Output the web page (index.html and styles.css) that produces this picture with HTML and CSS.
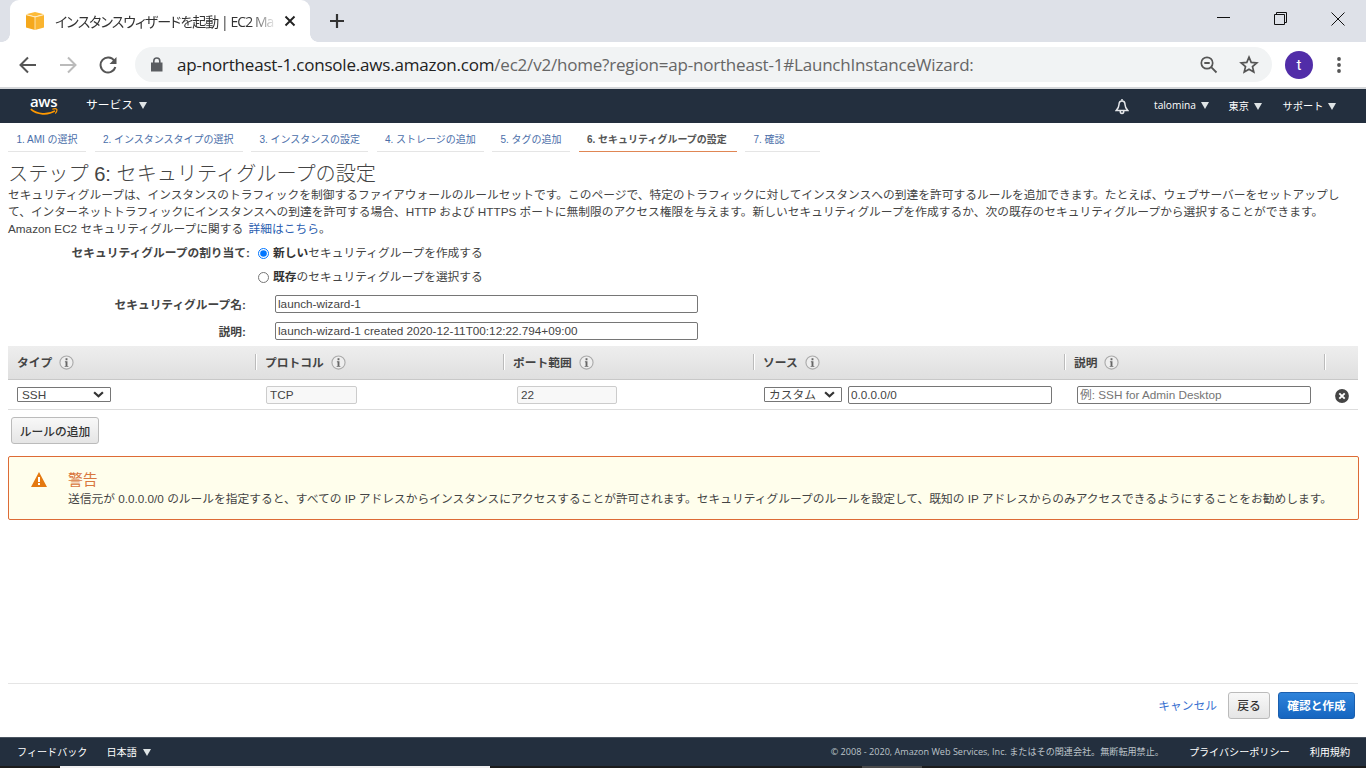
FILE: index.html
```html
<!DOCTYPE html>
<html lang="ja">
<head>
  <meta charset="UTF-8">
  <meta name="viewport" content="width=device-width, initial-scale=1.0">

  <title>インスタンスウィザードを起動 | EC2 Management Console</title>
  <link rel="stylesheet" href="styles.css">
</head>
<body>
  <svg class="defs">
    <symbol id="info" viewBox="0 0 16 16">
      <circle cx="8" cy="8" r="7" fill="#eee" stroke="#aaa" stroke-width="1.2"/>
      <path d="M7 3.500h2v2H7zM6.300 6.600H9v5h1v1H6v-1h1V7.600h-.7z" fill="#666"/>
    </symbol>
    <symbol id="caret" viewBox="0 0 10 6">
      <path d="M1 1l4 3.700L9 1" fill="none" stroke="#333" stroke-width="2"/>
    </symbol>
  </svg>

  <div class="tab-strip">
    <div class="tab">
      <svg class="favicon" width="20" height="20" viewBox="0 0 20 20">
        <path d="M1 3.700l9 2.300v13l-9-2.500z" fill="#f5a81c"/>
        <path d="M19 3.700L10 6v13l9-2.500z" fill="#fab42f"/>
        <path d="M1 3.200L10 1l9 2.200-9 2.300z" fill="#fdbb38"/>
        <path d="M10 6v13M1 3.700L10 6l9-2.300" fill="none" stroke="#fff0cd" stroke-width=".8"/>
      </svg>
      <span class="tab-title">インスタンスウィザードを起動 | EC2 Ma</span>
      <svg class="tab-close" width="12" height="12" viewBox="0 0 12 12"><path d="M1.500 1.500l9 9M10.500 1.500l-9 9" stroke="#222" stroke-width="1.900"/></svg>
    </div>
    <svg class="new-tab" width="16" height="16" viewBox="0 0 16 16"><path d="M8 1v14M1 8h14" stroke="#333" stroke-width="2.200"/></svg>
    <div class="window-buttons">
      <svg width="14" height="14" viewBox="0 0 14 14"><path d="M0 5.500h13" stroke="#111"/></svg>
      <svg width="14" height="14" viewBox="0 0 14 14"><path d="M.5 2.500h10v10H.5zM2.500 2.500v-2h10v10h-2" fill="none" stroke="#111"/></svg>
      <svg width="14" height="14" viewBox="0 0 14 14"><path d="M.5.5l13 13M13.500.5l-13 13" stroke="#111"/></svg>
    </div>
  </div>

  <div class="toolbar">
    <svg width="18" height="18" viewBox="0 0 18 18"><path d="M17 9H2M9 1.500L1.500 9 9 16.500" fill="none" stroke="#555" stroke-width="2"/></svg>
    <svg width="18" height="18" viewBox="0 0 18 18"><path d="M1 9h15M9 1.500L16.500 9 9 16.500" fill="none" stroke="#bbb" stroke-width="2"/></svg>
    <svg width="18" height="18" viewBox="0 0 18 18"><path d="M15.300 4.800A7.500 7.500 0 1 0 16.300 11" fill="none" stroke="#555" stroke-width="2"/><path d="M17.500 1v7h-7z" fill="#555"/></svg>
    <div class="omnibox">
      <svg width="12" height="15" viewBox="0 0 12 15"><path d="M0 5.500h11.500v9H0z" fill="#5a5d61"/><path d="M2.800 6V4a3 3 0 0 1 6 0v2" fill="none" stroke="#5a5d61" stroke-width="1.600"/></svg>
      <div class="url">ap-northeast-1.console.aws.amazon.com<span>/ec2/v2/home?region=ap-northeast-1#LaunchInstanceWizard:</span></div>
      <svg width="18" height="18" viewBox="0 0 18 18"><circle cx="7" cy="7" r="5.700" fill="none" stroke="#555" stroke-width="1.700"/><path d="M4.300 7h5.400M11.200 11.200l5.300 5.300" stroke="#555" stroke-width="1.800"/></svg>
      <svg class="star" width="20" height="19" viewBox="0 0 20 19"><path d="M10 2.200l2.200 5.200 5.600.5-4.300 3.700 1.300 5.500L10 14.200l-4.800 2.900 1.300-5.500-4.300-3.700 5.600-.5z" fill="none" stroke="#555" stroke-width="1.700"/></svg>
    </div>
    <div class="avatar">t</div>
    <svg class="menu" width="4" height="16" viewBox="0 0 4 16"><g fill="#555"><circle cx="2" cy="2" r="1.900"/><circle cx="2" cy="8" r="1.900"/><circle cx="2" cy="14" r="1.900"/></g></svg>
  </div>

  <div class="aws-nav">
    <div class="aws-logo">
      <span>aws</span>
      <svg width="28" height="8" viewBox="0 0 28 8"><path d="M.8 1.200C7 6.800 18 7.400 25 2.900" fill="none" stroke="#f90" stroke-width="1.600"/><path d="M22.300 1.300c2-.7 4-.5 4.500 0 .3 1-.4 3-1.600 4.200" fill="none" stroke="#f90" stroke-width="1.200"/></svg>
    </div>
    <div class="services">サービス <i class="arrow"></i></div>
    <svg class="bell" width="14" height="16" viewBox="0 0 14 16"><path d="M7 2c-2 0-3 1.700-3 3.500 0 2.600-1 4-2.800 6h11.600c-1.800-2-2.800-3.400-2.800-6C10 3.700 9 2 7 2zM7 0v2M5.200 12c0 3.300 3.600 3.300 3.600 0" fill="none" stroke="#e4e7ea" stroke-width="1.500"/></svg>
    <div class="nav-item account">talomina <i class="arrow"></i></div>
    <div class="nav-item region">東京 <i class="arrow"></i></div>
    <div class="nav-item support">サポート <i class="arrow"></i></div>
  </div>

  <div class="content">
    <div class="steps">
      <div class="step step1">1. AMI の選択</div>
      <div class="step step2">2. インスタンスタイプの選択</div>
      <div class="step step3">3. インスタンスの設定</div>
      <div class="step step4">4. ストレージの追加</div>
      <div class="step step5">5. タグの追加</div>
      <div class="step step6 active">6. セキュリティグループの設定</div>
      <div class="step step7">7. 確認</div>
    </div>

    <h1>ステップ 6: セキュリティグループの設定</h1>
    <p class="intro">セキュリティグループは、インスタンスのトラフィックを制御するファイアウォールのルールセットです。このページで、特定のトラフィックに対してインスタンスへの到達を許可するルールを追加できます。たとえば、ウェブサーバーをセットアップし<br>て、インターネットトラフィックにインスタンスへの到達を許可する場合、HTTP および HTTPS ポートに無制限のアクセス権限を与えます。新しいセキュリティグループを作成するか、次の既存のセキュリティグループから選択することができます。<br>Amazon EC2 セキュリティグループに関する <a>詳細はこちら</a>。</p>

    <div class="assign">
      <div class="assign-label">セキュリティグループの割り当て:</div>
      <div class="assign-options">
        <label><input type="radio" name="group" checked><span><b>新しい</b>セキュリティグループを作成する</span></label>
        <label><input type="radio" name="group"><span><b>既存</b>のセキュリティグループを選択する</span></label>
      </div>
    </div>
    <div class="field">
      <label for="group-name">セキュリティグループ名:</label>
      <input type="text" id="group-name" value="launch-wizard-1">
    </div>
    <div class="field">
      <label for="group-desc">説明:</label>
      <input type="text" id="group-desc" value="launch-wizard-1 created 2020-12-11T00:12:22.794+09:00">
    </div>

    <div class="rules">
      <div class="rules-head">
        <div class="col">タイプ <svg><use href="#info"/></svg></div>
        <div class="col">プロトコル <svg><use href="#info"/></svg></div>
        <div class="col">ポート範囲 <svg><use href="#info"/></svg></div>
        <div class="col">ソース <svg><use href="#info"/></svg></div>
        <div class="col">説明 <svg><use href="#info"/></svg></div>
        <div class="col"></div>
      </div>
      <div class="rules-row">
        <div class="cell type"><div class="pick"><select><option>SSH</option></select><svg><use href="#caret"/></svg></div></div>
        <div class="cell protocol"><input type="text" value="TCP" disabled></div>
        <div class="cell port"><input type="text" value="22" disabled></div>
        <div class="cell source"><div class="pick"><select><option>カスタム</option></select><svg><use href="#caret"/></svg></div><input type="text" value="0.0.0.0/0"></div>
        <div class="cell desc"><input type="text" placeholder="例: SSH for Admin Desktop"></div>
        <div class="cell remove"><svg width="14" height="14" viewBox="0 0 14 14"><circle cx="7" cy="7" r="6.900" fill="#444"/><path d="M4.300 4.300l5.400 5.400M9.700 4.300L4.300 9.700" stroke="#fff" stroke-width="1.900"/></svg></div>
      </div>
    </div>
    <button class="btn add-rule">ルールの追加</button>

    <div class="warning">
      <svg width="16" height="15" viewBox="0 0 16 15"><path d="M8 0l8 15H0z" fill="#e47911"/><path d="M7 5h2v5H7zM7 11h2v2H7z" fill="#fff"/></svg>
      <div>
        <h2>警告</h2>
        <p>送信元が 0.0.0.0/0 のルールを指定すると、すべての IP アドレスからインスタンスにアクセスすることが許可されます。セキュリティグループのルールを設定して、既知の IP アドレスからのみアクセスできるようにすることをお勧めします。</p>
      </div>
    </div>

    <div class="actions">
      <a>キャンセル</a>
      <button class="btn back">戻る</button>
      <button class="btn primary">確認と作成</button>
    </div>
  </div>

  <div class="aws-footer">
    <div>フィードバック</div>
    <div class="language">日本語 <i class="arrow"></i></div>
    <div class="copyright">© 2008 - 2020, Amazon Web Services, Inc. またはその関連会社。無断転用禁止。</div>
    <div class="privacy">プライバシーポリシー</div>
    <div class="terms">利用規約</div>
  </div>
  <div class="taskbar"><div class="search"></div><div class="task"></div></div>
</body>
</html>
```
FILE: styles.css
```css
* {
  box-sizing: border-box;
}

body {
  margin: 0;
  height: 768px;
  overflow: hidden;
  display: flex;
  flex-direction: column;
  background: #fff;
  color: #444;
  font-family: "Liberation Sans", "Noto Sans CJK JP", sans-serif;
  font-size: 11.74px;
}

svg {
  display: block;
  flex: none;
}

.defs {
  display: none;
}

/* browser window */
.tab-strip {
  height: 42px;
  flex: none;
  display: flex;
  background: #dee1e8;
}

.tab {
  position: relative;
  width: 300px;
  margin-left: 10px;
  padding: 0 14px 0 15px;
  display: flex;
  align-items: center;
  background: #fff;
  border-radius: 9px 9px 0 0;
}

.tab::before,
.tab::after {
  content: "";
  position: absolute;
  bottom: 0;
  width: 8px;
  height: 8px;
}

.tab::before {
  left: -8px;
  background: radial-gradient(circle at 0 0, transparent 7.5px, #fff 8px);
}

.tab::after {
  right: -8px;
  background: radial-gradient(circle at 100% 0, transparent 7.5px, #fff 8px);
}

.tab-title {
  width: 220px;
  margin-left: 10px;
  font-family: "Open Sans", "Noto Sans CJK JP", sans-serif;
  font-size: 14px;
  letter-spacing: -0.95px;
  font-feature-settings: "palt";
  white-space: nowrap;
  color: #333;
  -webkit-mask-image: linear-gradient(90deg, #000 195px, transparent 222px);
}

.tab-close {
  margin-left: 9px;
}

.new-tab {
  margin: 13px 0 0 19px;
}

.window-buttons {
  display: flex;
  gap: 43px;
  margin: 12px 21px 0 auto;
}

.toolbar {
  height: 47px;
  flex: none;
  display: flex;
  align-items: center;
  padding-left: 19px;
  border-bottom: 2px solid #d5d7da;
}

.toolbar > svg + svg {
  margin-left: 22px;
}

.omnibox {
  width: 1137px;
  height: 35px;
  margin-left: 18px;
  padding: 0 13px 0 16px;
  display: flex;
  align-items: center;
  background: #f1f3f4;
  border-radius: 18px;
}

.url {
  flex: 1;
  margin-left: 14px;
  font-family: "Open Sans", sans-serif;
  font-size: 17px;
  letter-spacing: -0.2px;
  white-space: nowrap;
  color: #222;
}

.url span {
  color: #666;
}

.star {
  margin-left: 21px;
}

.avatar {
  width: 28px;
  height: 28px;
  margin-left: 13px;
  border-radius: 50%;
  background: #512da8;
  color: #fff;
  font: 15px/28px Roboto, sans-serif;
  text-align: center;
}

.toolbar .menu {
  margin-left: 24px;
}

/* console header */
.aws-nav {
  height: 34px;
  flex: none;
  display: flex;
  align-items: center;
  padding: 0 30px 2px;
  background: #232f3e;
  color: #fff;
  font-family: "Open Sans", "Noto Sans CJK JP", sans-serif;
  font-size: 10.2px;
}

.aws-logo {
  width: 28px;
  font-size: 15px;
  font-weight: 600;
  line-height: 13px;
  letter-spacing: -0.4px;
}

.arrow {
  display: inline-block;
  margin-left: 2px;
  border: 4px solid transparent;
  border-top: 7px solid #dfe4e6;
  border-bottom: 0;
}

.services {
  margin: -3px 0 0 28px;
  font-size: 11.8px;
}

.services .arrow {
  margin-left: 3px;
}

.bell {
  margin: 3px 0 0 auto;
}

.account {
  margin-left: 25px;
}

.region {
  margin-left: 20px;
}

.support {
  margin-left: 21px;
}

/* wizard */
.content {
  flex: 1;
  display: flex;
  flex-direction: column;
  padding: 0 8px;
}

.steps {
  display: flex;
  gap: 8.5px;
  padding-top: 5px;
  font-size: 10px;
  line-height: 23px;
  color: #4a6ea9;
}

.step {
  width: 78px;
  padding-left: 8.4px;
  white-space: nowrap;
  border-bottom: 1px solid #e5e5e5;
}

.step2 {
  width: 148px;
}

.step3 {
  width: 117px;
}

.step4 {
  width: 107px;
}

.step5 {
  width: 78px;
}

.step6 {
  width: 158px;
}

.step7 {
  width: 75px;
}

.step.active {
  color: #555;
  font-weight: bold;
  border-bottom: 1px solid #e08654;
}

h1 {
  margin: 11px 0 0;
  font-size: 20.15px;
  font-weight: 300;
  line-height: 23px;
}

.intro {
  margin: 0;
  line-height: 17px;
  white-space: nowrap;
}

.intro a {
  margin-left: 2px;
  color: #2a5db0;
}

.assign {
  display: flex;
  margin-top: 4px;
  line-height: 24px;
}

.assign-label {
  width: 242px;
  text-align: right;
  font-weight: bold;
}

.assign-options {
  margin-left: 7px;
}

.assign-options label {
  display: flex;
  align-items: center;
}

.assign-options input {
  width: 11px;
  height: 11px;
  margin: 0 4px 0 1px;
}

.assign-options b {
  color: #333;
}

.field {
  display: flex;
  align-items: center;
  height: 27px;
}

.assign + .field {
  margin-top: 1px;
}

.field label {
  width: 238px;
  margin-right: 29px;
  text-align: right;
  font-weight: bold;
}

.field input {
  width: 423px;
}

input[type="text"] {
  height: 18px;
  padding: 0 2px;
  font: inherit;
  color: #444;
  border: 1px solid #767676;
  border-radius: 2px;
}

/* dropdown with its own caret */
.pick {
  display: grid;
  align-items: center;
}

.pick select,
.pick svg {
  grid-area: 1 / 1;
}

.pick svg {
  width: 11px;
  height: 7px;
  margin-right: 7px;
  justify-self: end;
  pointer-events: none;
}

select {
  appearance: none;
  height: 15px;
  padding: 0 4px;
  font: inherit;
  line-height: 13px;
  color: #444;
  border: 1px solid #767676;
  border-radius: 1px;
  background: #fff;
}

.rules-head,
.rules-row {
  display: grid;
  grid-template-columns: 247px 248px 250px 311px 260px 34px;
  align-items: center;
}

.rules-head {
  height: 34px;
  margin-top: 2px;
  padding-bottom: 1px;
  background: linear-gradient(#eee, #dfdfdf);
  border-bottom: 1px solid #c8c8c8;
  font-weight: bold;
}

.col {
  display: flex;
  align-items: center;
  height: 16px;
  padding: 0 0 1px 9px;
  border-left: 1px solid #bbb;
  box-shadow: inset 1px 0 #fff;
}

.col:first-child {
  border: 0;
  box-shadow: none;
}

.col svg {
  width: 15px;
  height: 15px;
  margin: 1px 0 0 7px;
}

.rules-row {
  height: 30px;
  border-bottom: 1px solid #ddd;
}

.cell {
  display: flex;
  align-items: center;
}

.rules-row input[type="text"]:disabled {
  padding: 0 3px;
  background: #f8f8f8;
  border-color: #ccc;
}

.type {
  padding-left: 9px;
}

.type select {
  width: 94px;
}

.protocol {
  padding-left: 11px;
}

.protocol input {
  width: 91px;
}

.port {
  padding-left: 14px;
}

.port input {
  width: 100px;
}

.source {
  padding-left: 11px;
  gap: 6px;
}

.source select {
  width: 78px;
}

.source input {
  width: 204px;
}

.desc {
  padding-left: 13px;
}

.desc input {
  width: 234px;
}

.remove {
  padding: 3px 0 0 11px;
}

.btn {
  height: 27px;
  padding: 0;
  font: inherit;
  font-weight: 500;
  color: #333;
  border: 1px solid #bbb;
  border-radius: 3px;
  background: linear-gradient(#f8f8f8, #e5e5e5);
}

.add-rule {
  width: 88px;
  margin: 7px 0 0 3px;
}

.warning {
  display: flex;
  width: 1351px;
  height: 64px;
  margin-top: 12px;
  padding: 14px 0 0 22px;
  border: 1px solid #dd6b36;
  border-radius: 2px;
  background: #fffeec;
}

.warning svg {
  margin: 1px 21px 0 0;
}

.warning h2 {
  margin: 0;
  font-size: 14.8px;
  font-weight: 400;
  line-height: 19px;
  color: #d9773f;
}

.warning p {
  margin: 0;
  line-height: 17px;
  white-space: nowrap;
}

.actions {
  display: flex;
  align-items: center;
  justify-content: flex-end;
  height: 54px;
  margin-top: auto;
  padding: 0 3px 10px 0;
  border-top: 1px solid #e5e5e5;
}

.actions a {
  margin-top: -2px;
  color: #3b73d1;
}

.actions .btn {
  padding-bottom: 2px;
}

.back {
  width: 42px;
  margin: 0 8px 0 11px;
}

.primary {
  width: 77px;
  color: #fff;
  font-weight: bold;
  border-color: #1b5fae;
  background: linear-gradient(#2f83da, #1565c0);
}

/* console footer */
.aws-footer {
  height: 29px;
  flex: none;
  display: flex;
  align-items: center;
  padding: 0 16px 2px 17px;
  background: #232f3e;
  border-top: 1px solid #4b5561;
  color: #fff;
  font-family: "Open Sans", "Noto Sans CJK JP", sans-serif;
  font-size: 10.1px;
}

.language {
  margin-left: 19px;
}

.language .arrow {
  margin-left: 4px;
}

.copyright {
  margin-left: auto;
  font-size: 9.1px;
  color: #bcc3c9;
}

.privacy {
  margin-left: 25px;
}

.terms {
  margin-left: 20px;
}

.taskbar {
  height: 2px;
  flex: none;
  display: flex;
  background: #1c1c1c;
}

.search {
  width: 430px;
  margin-left: 60px;
  background: #f0f0f0;
}

.task {
  width: 60px;
  margin-left: 372px;
  background: #4a4a4a;
}
```
